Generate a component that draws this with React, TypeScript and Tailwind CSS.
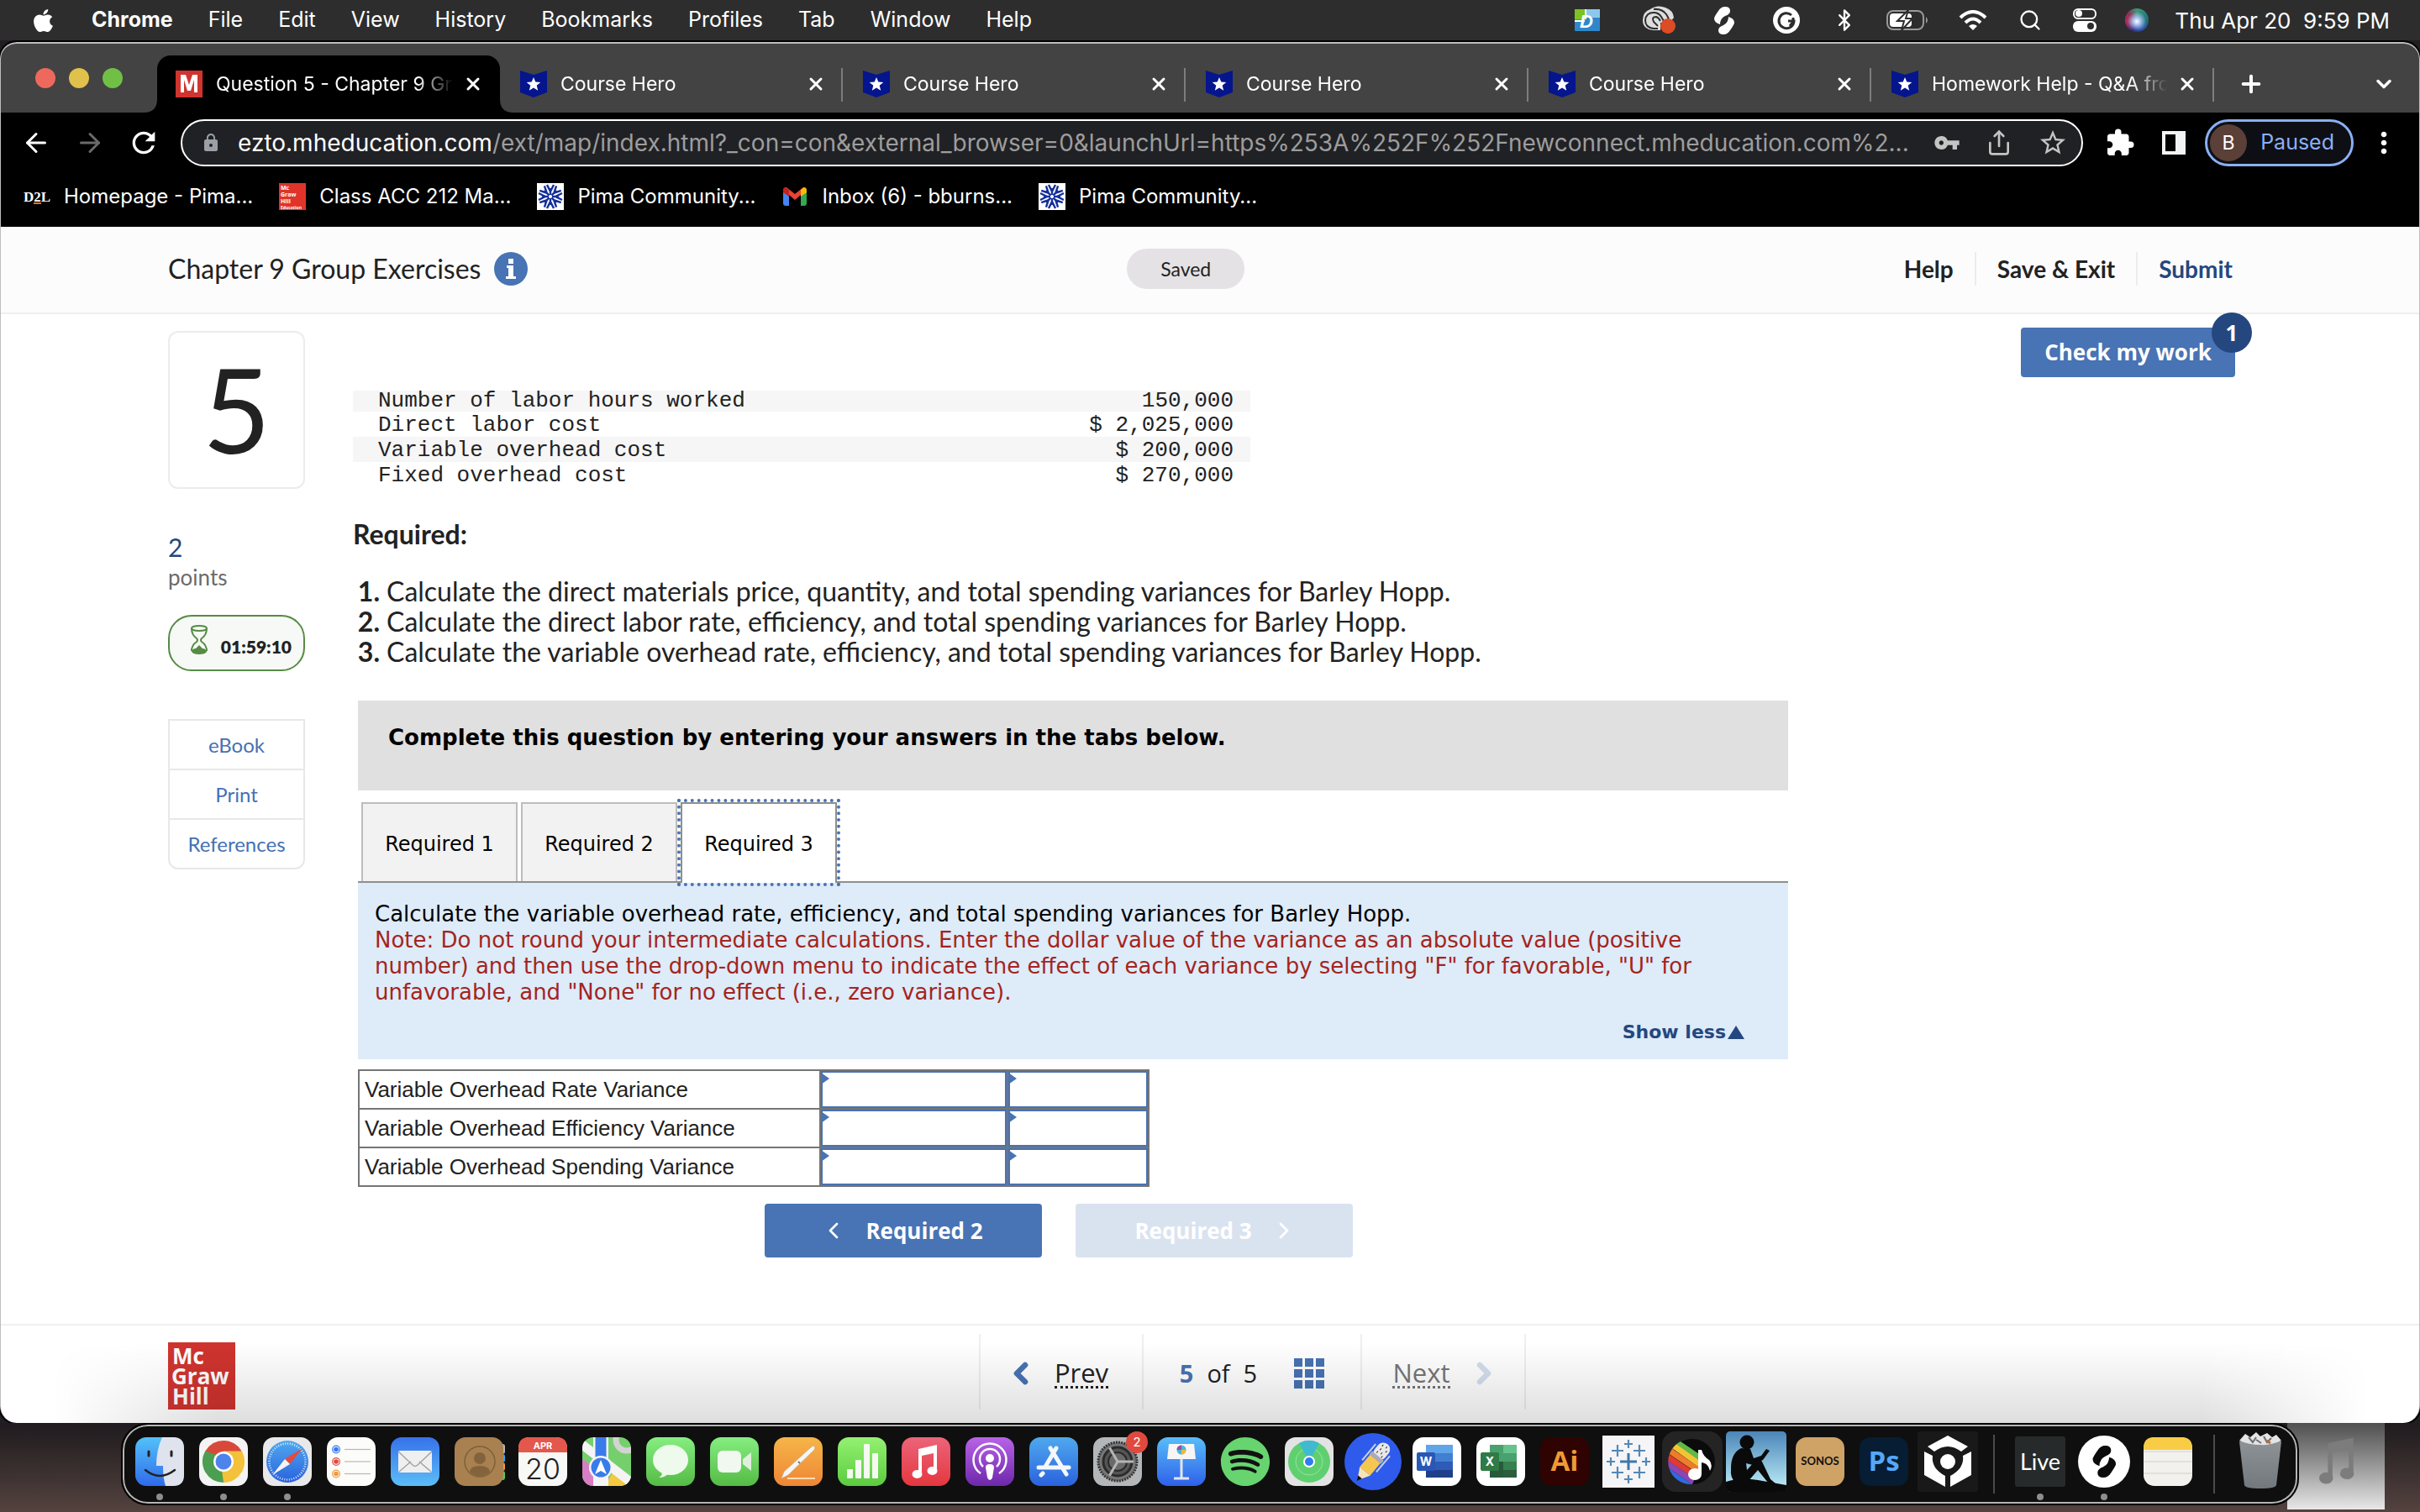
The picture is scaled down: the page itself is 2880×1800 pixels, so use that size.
import React from 'react';
import { ArrowLeft, ArrowRight, Bluetooth, ChevronDown, ChevronLeft, ChevronRight, Plus, Search, Share, X } from 'lucide-react';
import { MdExtension, MdLock, MdMoreVert, MdRefresh, MdStarBorder, MdVpnKey } from 'react-icons/md';
import { FaApple, FaSpotify } from 'react-icons/fa';

const menus = ['File', 'Edit', 'View', 'History', 'Bookmarks', 'Profiles', 'Tab', 'Window', 'Help'];

const heroTabs = ['Course Hero', 'Course Hero', 'Course Hero', 'Course Hero', 'Homework Help - Q&A from'];

const laborRows = [
  ['Number of labor hours worked', '150,000'],
  ['Direct labor cost', '$ 2,025,000'],
  ['Variable overhead cost', '$ 200,000'],
  ['Fixed overhead cost', '$ 270,000'],
];

const requirements = [
  'Calculate the direct materials price, quantity, and total spending variances for Barley Hopp.',
  'Calculate the direct labor rate, efficiency, and total spending variances for Barley Hopp.',
  'Calculate the variable overhead rate, efficiency, and total spending variances for Barley Hopp.',
];

const variances = ['Variable Overhead Rate Variance', 'Variable Overhead Efficiency Variance', 'Variable Overhead Spending Variance'];

const linkHalf = 'M13 0Q19 0 19 5Q19 9 13 11Q7 14 7 21Q0 19 0 14Q0 12 5 5Q8 0 13 0Z';

const MenuBar: React.FC = () => (
  <div className="h-12 shrink-0 bg-[#2d2d2d] text-white flex items-center justify-between pl-9 pr-9 text-[25px]">
    <div className="flex items-center gap-[42px]">
      <FaApple className="size-[31px]" />
      <span className="font-bold">Chrome</span>
      {menus.map((m) => (
        <button key={m}>{m}</button>
      ))}
    </div>
    <div className="flex items-center">
      <svg viewBox="0 0 30 26" className="w-[30px] h-[26px] mr-[50px]">
        <rect width="30" height="26" rx="1" fill="#2f87c9" />
        <rect width="12" height="12" fill="#7ac321" />
        <rect x="14" width="16" height="10" fill="#8cc8ee" />
        <path d="M0 14h12M13 0v12" stroke="#fff" strokeWidth="2" />
        <text x="6" y="22" fontSize="22" fontWeight="700" fontStyle="italic" fontFamily="Liberation Sans, sans-serif" fill="#fff">D</text>
      </svg>
      <svg viewBox="0 0 40 34" className="w-[40px] h-[34px] mr-[46px]">
        <path d="M10 4Q18 -2 28 2Q37 5 38 14L33 20H22V29H14Q1 28 1 17Q1 7 10 4Z" fill="#ddd" />
        <path d="M19 27H14Q4 26 4 17Q5 8 14 8Q20 8 23 13L26 18" fill="none" stroke="#2d2d2d" strokeWidth="2" />
        <path d="M19 24L14 19Q11 13 17 13Q20 14 22 18M14 4Q24 3 29 10Q31 13 32 16" fill="none" stroke="#2d2d2d" strokeWidth="2" />
        <circle cx="31" cy="24" r="9" fill="#de4c26" />
      </svg>
      <svg viewBox="0 0 24 33" className="w-6 h-[33px] mr-[46px]" fill="#fff">
        <path d={linkHalf} />
        <path d={linkHalf} transform="rotate(180 12 16.500)" />
      </svg>
      <svg viewBox="0 0 32 32" className="size-8 mr-[39px]">
        <circle cx="16" cy="16" r="16" fill="#fff" />
        <path d="M22 10A9 9 0 1 0 25 17H18M24 13V18L20 23" fill="none" stroke="#2d2d2d" strokeWidth="3" />
      </svg>
      <Bluetooth className="size-7 mr-[36px]" strokeWidth={2} />
      <svg viewBox="0 0 50 26" className="w-[50px] h-[26px] mr-[36px]">
        <rect x="1" y="2" width="43" height="22" rx="7" fill="none" stroke="#999" strokeWidth="2" />
        <path d="M47 9q4 4 0 8z" fill="#999" />
        <rect x="4" y="5" width="26" height="16" rx="4" fill="#fff" />
        <path d="M26 1L13 14h8l-3 11L31 11h-8z" fill="#fff" stroke="#2d2d2d" strokeWidth="2" />
      </svg>
      <svg viewBox="0 0 34 24" className="w-[34px] h-6 mr-[37px]" fill="none" stroke="#fff" strokeWidth="4">
        <path d="M2 9Q17 -5 32 9M8 15Q17 6 26 15" />
        <path d="M17 24L12 19Q17 15 22 19Z" fill="#fff" stroke="none" />
      </svg>
      <Search className="size-7 mr-[37px]" strokeWidth={2} />
      <svg viewBox="0 0 28 28" className="size-7 mr-[34px]">
        <rect x="1" y="1" width="26" height="11" rx="5" fill="none" stroke="#fff" strokeWidth="2" />
        <circle cx="7" cy="6" r="4" fill="#fff" />
        <rect y="15" width="28" height="13" rx="6" fill="#fff" />
        <circle cx="21" cy="21" r="4" fill="#2d2d2d" />
      </svg>
      <span className="size-7 rounded-full mr-[31px] bg-[radial-gradient(circle_at_50%_55%,#fff_0%,#a9c4f0_20%,transparent_55%),conic-gradient(#3c9a7d,#1f6f78_90deg,#2b52b0_150deg,#2c2f80_200deg,#b02d5c_260deg,#8a3355_310deg,#3c9a7d)]" />
      <span className="whitespace-pre text-[26px]">Thu Apr 20  9:59 PM</span>
    </div>
  </div>
);

const HeroIcon = () => (
  <svg viewBox="0 0 32 32" className="size-8 shrink-0">
    <path d="M0 0L16 5L32 0V26L16 32L0 26Z" fill="#04158e" />
    <path d="M16 8l2.300 5.500 6 .4-4.600 3.900 1.500 5.900L16 20.400l-5.200 3.300 1.500-5.900-4.600-3.900 6-.4z" fill="#fff" />
  </svg>
);

const TabStrip: React.FC = () => (
  <div className="h-[82px] bg-[#434343] flex text-white text-[23px]">
    <div className="w-[186px] shrink-0 flex items-center gap-4 pl-[41px]">
      <span className="size-6 rounded-full bg-[#ee695d]" />
      <span className="size-6 rounded-full bg-[#e0c14c]" />
      <span className="size-6 rounded-full bg-[#71c046]" />
    </div>
    <div className="relative w-[408px] min-w-0 mt-[14px] bg-black rounded-t-[16px] flex items-center pl-[22px] pr-5">
      <svg viewBox="0 0 16 16" className="absolute bottom-0 -left-4 size-4"><path d="M16 0V16H0Q16 16 16 0" fill="#000" /></svg>
      <svg viewBox="0 0 16 16" className="absolute bottom-0 -right-4 size-4"><path d="M0 0V16H16Q0 16 0 0" fill="#000" /></svg>
      <svg viewBox="0 0 32 32" className="size-8 shrink-0">
        <rect width="32" height="32" fill="#d0342f" />
        <path d="M6 26V5h6l4 12 4-12h6v21h-4V11l-4 13h-4L10 11v15z" fill="#fff" />
      </svg>
      <span className="ml-4 flex-1 whitespace-nowrap overflow-hidden mask-[linear-gradient(to_right,black_85%,transparent)]">Question 5 - Chapter 9 Group</span>
      <button aria-label="Close tab" className="ml-3"><X className="size-6" strokeWidth={3} /></button>
    </div>
    {heroTabs.map((t, i) => (
      <div key={i} className="w-[408px] min-w-0 mt-[14px] flex items-center pl-6 pr-5 relative">
        <HeroIcon />
        <span className="ml-4 flex-1 whitespace-nowrap overflow-hidden mask-[linear-gradient(to_right,black_85%,transparent)]">{t}</span>
        <button aria-label="Close tab" className="ml-3"><X className="size-6" strokeWidth={3} /></button>
        <span className="absolute right-0 top-[15px] h-10 w-[2px] bg-[#7d7d7d]" />
      </div>
    ))}
    <div className="grow mt-[14px] flex items-center justify-between pl-[28px] pr-[28px]">
      <button aria-label="New tab"><Plus className="size-8" strokeWidth={3} /></button>
      <button aria-label="Search tabs"><ChevronDown className="size-7" strokeWidth={3} /></button>
    </div>
  </div>
);

const SnowIcon = () => (
  <svg viewBox="0 0 32 32" className="size-8">
    <rect width="32" height="32" fill="#fff" />
    <g stroke="#15309b" strokeWidth="2.400" fill="none">
      {[0, 45, 90, 135, 180, 225, 270, 315].map((r) => (
        <path key={r} transform={`rotate(${r} 16 16)`} d="M16 14V6M12 2L16 10L20 2" />
      ))}
    </g>
  </svg>
);

const bookmarks = [
  {
    label: 'Homepage - Pima...',
    icon: (
      <svg viewBox="0 0 32 32" className="size-8">
        <text x="0" y="22" fontSize="17" fontFamily="Liberation Serif, serif" fontWeight="700" fill="#fff">D2L</text>
        <path d="M12 24h9" stroke="#e57424" strokeWidth="2" />
      </svg>
    ),
  },
  {
    label: 'Class ACC 212 Ma...',
    icon: (
      <svg viewBox="0 0 32 32" className="size-8" fontFamily="Open Sans, sans-serif" fontWeight="700" fill="#fff">
        <rect width="32" height="32" fill="#e0332a" />
        <text x="2" y="8" fontSize="7">Mc</text>
        <text x="2" y="16" fontSize="7">Graw</text>
        <text x="2" y="24" fontSize="7">Hill</text>
        <text x="2" y="31" fontSize="5">Education</text>
      </svg>
    ),
  },
  { label: 'Pima Community...', icon: <SnowIcon /> },
  {
    label: 'Inbox (6) - bburns...',
    icon: (
      <svg viewBox="0 0 32 32" className="size-8">
        <path d="M2 9V24Q2 27 5 27H9V13Z" fill="#4285f4" />
        <path d="M23 13V27H27Q30 27 30 24V9Z" fill="#34a853" />
        <path d="M2 9Q2 5 6 5L16 13L26 5Q28 5 28 5L23 14L16 20L9 14L2 11Z" fill="#ea4335" />
        <path d="M23 8L26 5.500Q30 4 30 9V11L23 16Z" fill="#fbbc04" />
        <path d="M2 9Q2 4 6 5.500L9 8V16L2 11Z" fill="#c5221f" />
      </svg>
    ),
  },
  { label: 'Pima Community...', icon: <SnowIcon /> },
];

const Toolbar: React.FC = () => (
  <div className="bg-black text-white h-[136px] pt-2">
    <div className="h-14 flex items-center pl-6 pr-[22px]">
      <button aria-label="Back"><ArrowLeft className="size-9" strokeWidth={2} /></button>
      <button aria-label="Forward" className="ml-7 text-[#6b6b6b]"><ArrowRight className="size-9" strokeWidth={2} /></button>
      <button aria-label="Reload" className="ml-[26px]"><MdRefresh className="size-10" /></button>
      <div className="ml-6 flex-1 min-w-0 h-14 rounded-full border-2 border-white bg-[#202124] flex items-center pl-[22px] pr-4">
        <MdLock className="size-6 text-[#9aa0a6] shrink-0" />
        <div role="textbox" aria-label="Address" tabIndex={0} className="ml-5 flex-1 min-w-0 truncate text-[28px] text-[#9d9d9d]">
          <span className="text-white">ezto.mheducation.com</span>/ext/map/index.html?_con=con&amp;external_browser=0&amp;launchUrl=https%253A%252F%252Fnewconnect.mheducation.com%2...
        </div>
        <div className="flex items-center gap-[30px] ml-4 text-[#c4c4c4]">
          <MdVpnKey className="size-8" />
          <Share className="size-8" strokeWidth={2} />
          <MdStarBorder className="size-9" />
        </div>
      </div>
      <MdExtension className="size-9 ml-[26px]" />
      <svg viewBox="0 0 28 28" className="size-7 ml-[32px]"><path d="M0 0H28V28H0ZM4 4V24H16V4Z" fillRule="evenodd" fill="#f1f3f4" /></svg>
      <button className="ml-[23px] h-14 rounded-full border-3 border-[#8ab0f3] bg-[#0e0f14] pl-[3px] pr-5 flex items-center gap-4 text-[#8ab0f3] text-[25px]">
        <span className="size-11 rounded-full bg-[#5b4038] text-white text-[23px] flex items-center justify-center">B</span>
        Paused
      </button>
      <button aria-label="Menu" className="ml-4"><MdMoreVert className="size-10" /></button>
    </div>
    <div className="h-[72px] flex items-center gap-[31px] pl-[27px] text-[24px]">
      {bookmarks.map((b, i) => (
        <a key={i} href="#" className="flex items-center gap-4">
          {b.icon}
          {b.label}
        </a>
      ))}
    </div>
  </div>
);

const PageHeader: React.FC = () => (
  <header className="h-[104px] bg-[#fcfcfc] border-b-2 border-[#efefef] pl-[199px] pr-[222px] pb-0.5 grid grid-cols-[33fr_140px_34fr] items-center">
    <div className="flex items-center gap-4 text-[32px]">
      <h1>Chapter 9 Group Exercises</h1>
      <svg viewBox="0 0 40 40" className="size-10">
        <circle cx="20" cy="20" r="20" fill="#4873b4" />
        <rect x="17" y="8" width="6" height="6" fill="#fff" />
        <path d="M15 16h8v13h3v3H14v-3h3V19h-2z" fill="#fff" />
      </svg>
    </div>
    <span className="h-12 rounded-full bg-[#e4e2e5] text-[23px] flex items-center justify-center">Saved</span>
    <nav className="flex items-center justify-end text-[28px] leading-10 font-bold">
      <a href="#" className="pr-[25px]">Help</a>
      <a href="#" className="px-[25px] border-x-2 border-[#ececec]">Save &amp; Exit</a>
      <a href="#" className="pl-[25px] text-[#24477f]">Submit</a>
    </nav>
  </header>
);

const SideColumn: React.FC = () => (
  <aside className="w-[163px] shrink-0 mt-1">
    <div className="h-[188px] border-2 border-[#ececec] rounded-xl flex items-center justify-center text-[140px] leading-none pb-1">5</div>
    <div className="mt-[50px] text-[30px] leading-[38px] text-[#24477f]">2</div>
    <div className="text-[26px] leading-[34px] text-[#6b6b6b]">points</div>
    <div className="mt-7 h-[67px] rounded-[28px] border-2 border-[#568b45] bg-[#f6f9f5] flex items-center justify-between pl-6 pr-3.5 pt-1">
      <svg viewBox="0 0 22 36" className="w-[22px] h-[36px] mb-3">
        <g fill="none" stroke="#568b45" strokeWidth="2">
          <ellipse cx="11" cy="4" rx="9" ry="3" />
          <path d="M2 4Q2 12 8 16Q10 18 8 20Q2 24 2 31M20 4Q20 12 14 16Q12 18 14 20Q20 24 20 31" />
        </g>
        <path d="M2 32Q3 28 7 28L11 24L15 28Q19 28 20 32Q18 35 11 35Q4 35 2 32" fill="#568b45" />
      </svg>
      <span className="text-[21px] font-extrabold pt-1">01:59:10</span>
    </div>
    <nav className="mt-[57px] border-2 border-[#e8e8e8] rounded-b-xl divide-y-2 divide-[#e8e8e8] text-[24px] leading-[57px] text-center text-[#4471b4] flex flex-col">
      <a href="#">eBook</a>
      <a href="#">Print</a>
      <a href="#">References</a>
    </nav>
  </aside>
);

const Marker = () => (
  <svg viewBox="0 0 10 14" className="absolute left-0 top-0.5 w-[10px] h-[14px] pointer-events-none"><path d="M0 0L10 7L0 14Z" fill="#4873b4" /></svg>
);

const Question: React.FC = () => (
  <section className="flex-1 max-w-[1708px] pt-[75px]">
    <table className="w-[1068px] font-['Liberation_Mono',monospace] text-[26px]">
      <tbody>
        {laborRows.map(([label, value], i) => (
          <tr key={label} className={i === 0 ? 'bg-[#f6f6f6] leading-[25px]' : 'odd:bg-[#f6f6f6] leading-7'}>
            <td className={i === 0 ? 'pl-[30px]' : 'pl-[30px] pt-0.5'}>{label}</td>
            <td className={i === 0 ? 'pr-5 text-right' : 'pr-5 pt-0.5 text-right'}>{value}</td>
          </tr>
        ))}
      </tbody>
    </table>
    <h2 className="mt-[38px] text-[32px] leading-9 font-bold">Required:</h2>
    <ol className="mt-8 text-[32px] leading-9">
      {requirements.map((r, i) => (
        <li key={r} className="flex">
          <b className="w-8 text-right mr-2">{i + 1}.</b>
          {r}
        </li>
      ))}
    </ol>

    <div className="ml-1.5 mt-10 font-['DejaVu_Sans',sans-serif] text-black">
      <div className="h-[107px] bg-[#e0e0e0] pt-7 pl-9 text-[26px] leading-8 font-bold">
        Complete this question by entering your answers in the tabs below.
      </div>
      <div role="tablist" className="mt-[14px] pl-1 flex gap-1 border-b-2 border-[#8f8f8f] text-[24px]">
        <button role="tab" className="w-[186px] h-[94px] pt-1 bg-[#f2f2f2] border-2 border-b-0 border-[#bdbdbd]">Required 1</button>
        <button role="tab" className="w-[186px] h-[94px] pt-1 bg-[#f2f2f2] border-2 border-b-0 border-[#bdbdbd]">Required 2</button>
        <button role="tab" aria-selected="true" className="w-[186px] h-[96px] -mb-0.5 pt-0.5 bg-white border-2 border-b-0 border-[#8f8f8f] outline-4 outline-dotted outline-[#4873b4] relative">
          Required 3
        </button>
      </div>
      <div className="bg-[#deebf8] pt-[22px] pl-5 pr-[52px] pb-4 text-[26px] leading-[31px]">
        <p>Calculate the variable overhead rate, efficiency, and total spending variances for Barley Hopp.</p>
        <p className="text-[#a32420]">
          Note: Do not round your intermediate calculations. Enter the dollar value of the variance as an absolute value (positive number) and then use the drop-down menu to indicate the effect of each variance by selecting "F" for favorable, "U" for unfavorable, and "None" for no effect (i.e., zero variance).
        </p>
        <div className="mt-4 flex justify-end">
          <button className="flex items-center gap-0.5 text-[22px] leading-8 font-bold text-[#24477f]">
            Show less
            <svg viewBox="0 0 20 16" className="w-5 h-4"><path d="M10 0L20 16H0Z" fill="#24477f" /></svg>
          </button>
        </div>
      </div>

      <table className="mt-3 border-collapse font-['Liberation_Sans',sans-serif] text-[26px] text-[#222]">
        <tbody>
          {variances.map((v) => (
            <tr key={v} className="h-[46px]">
              <th scope="row" className="w-[549px] border-2 border-[#757575] pl-1.5 text-left font-normal leading-[30px]">{v}</th>
              <td className="w-[223px] border-2 border-[#757575] p-0">
                <div className="relative">
                  <Marker />
                  <input aria-label={v} className="block w-full h-11 border-2 border-[#4873b4] bg-white outline-none px-4" />
                </div>
              </td>
              <td className="w-[168px] border-2 border-[#757575] p-0">
                <div className="relative">
                  <Marker />
                  <select aria-label={`${v} effect`} defaultValue="" className="block w-full h-11 border-2 border-[#4873b4] bg-white appearance-none px-4">
                    <option value=""></option>
                  </select>
                </div>
              </td>
            </tr>
          ))}
        </tbody>
      </table>

      <div className="mt-5 pr-[34px] flex justify-center gap-10 font-['Open_Sans',sans-serif] font-bold text-[26px] text-white">
        <button className="w-[330px] h-16 rounded-sm bg-[#4873b4] flex items-center justify-center gap-[22px] pr-1">
          <ChevronLeft className="size-8" strokeWidth={2} />
          Required 2
        </button>
        <button disabled className="w-[330px] h-16 rounded-sm bg-[#d9e3f0] flex items-center justify-center gap-[22px] pl-1">
          Required 3
          <ChevronRight className="size-8" strokeWidth={2} />
        </button>
      </div>
    </div>
  </section>
);

const PageFooter: React.FC = () => (
  <footer className="relative h-[118px] border-t-2 border-[#f0f0f0] pl-[199px] flex items-start">
    <svg viewBox="0 0 80 80" className="size-20 mt-5" fontFamily="Open Sans, sans-serif" fontWeight="700" fontSize="26" fill="#fff">
      <rect width="80" height="80" fill="#d0342f" />
      <text x="5" y="26">Mc</text>
      <text x="4" y="50">Graw</text>
      <text x="5" y="74">Hill</text>
    </svg>
    <div className="mt-2.5 ml-[885px] h-[90px] flex items-center text-[31px] border-x-2 border-[#efefef] divide-x-2 divide-[#efefef] font-['Open_Sans',sans-serif]">
      <a href="#" className="w-[194px] h-full flex items-center justify-center gap-5 pt-1 pr-3">
        <ChevronLeft className="size-10" strokeWidth={4} color="#4873b4" />
        <span className="border-b-3 border-dotted border-[#222] leading-8">Prev</span>
      </a>
      <div className="w-[260px] h-full flex items-center justify-center gap-11 pt-1">
        <span className="text-[29px] flex gap-4"><b className="text-[#4873b4]">5</b> <span>of</span> <span>5</span></span>
        <svg viewBox="0 0 36 36" className="size-9" fill="#4873b4">
          {[0, 13, 26].map((y) => [0, 13, 26].map((x) => <rect key={`${x}-${y}`} x={x} y={y} width="10" height="10" />))}
        </svg>
      </div>
      <a href="#" className="w-[193px] h-full flex items-center justify-center gap-5 pt-1 pl-2 text-[#767676]">
        <span className="border-b-3 border-dotted border-[#767676] leading-8">Next</span>
        <ChevronRight className="size-10" strokeWidth={4} color="#d4dfee" />
      </a>
    </div>
    <div className="absolute inset-x-0 bottom-0 h-24 pointer-events-none bg-linear-to-b from-transparent to-black/13 mask-[linear-gradient(to_right,transparent_60px,black_260px,black_calc(100%-260px),transparent_calc(100%-60px))]" />
  </footer>
);

const Tile = ({ fill }: { fill: string }) => <rect x="9" y="9" width="58" height="58" rx="13" fill={fill} />;

const NotePath = ({ fill }: { fill: string }) => (
  <g fill={fill}>
    <path d="M29 23L51 18V50H47V28L33 31V54H29Z" />
    <ellipse cx="27.500" cy="53" rx="6" ry="5" />
    <ellipse cx="45.500" cy="49" rx="6" ry="5" />
  </g>
);

const dockApps: { name: string; running?: boolean; art: React.ReactNode }[] = [
  {
    name: 'Finder',
    running: true,
    art: (
      <>
        <Tile fill="url(#finder)" />
        <path d="M41 9H54Q67 9 67 22V54Q67 67 54 67H45Q42 58 42 43H34Q34 24 41 9Z" fill="#dfe3ee" />
        <path d="M25 26v5M52 26v5" stroke="#222" strokeWidth="3" strokeLinecap="round" />
        <path d="M21 48Q38 62 56 48" fill="none" stroke="#222" strokeWidth="2.500" strokeLinecap="round" />
      </>
    ),
  },
  {
    name: 'Chrome',
    running: true,
    art: (
      <>
        <Tile fill="#f4f4f4" />
        <path d="M38 38L16.300 25.500A25 25 0 0 1 59.700 25.500Z" fill="#d9493a" />
        <path d="M38 38L59.700 25.500A25 25 0 0 1 38 63Z" fill="#f3c13a" />
        <path d="M38 38L38 63A25 25 0 0 1 16.300 25.500Z" fill="#4c9e50" />
        <path d="M38 25.500H59.700L48 44Z" fill="#f3c13a" />
        <path d="M27 44L16.300 25.500L30 30Z" fill="#4c9e50" />
        <path d="M49 44L38 63L36 48Z" fill="#f3c13a" />
        <circle cx="38" cy="38" r="12" fill="#fff" />
        <circle cx="38" cy="38" r="9.500" fill="#4f83ec" />
      </>
    ),
  },
  {
    name: 'Safari',
    running: true,
    art: (
      <>
        <Tile fill="#e9e9eb" />
        <circle cx="38" cy="38" r="25" fill="url(#blue)" />
        <circle cx="38" cy="38" r="21.500" fill="none" stroke="#fff" strokeWidth="2.500" strokeDasharray="0.800 2" />
        <path d="M56 22L41 41L35 35Z" fill="#e8483f" />
        <path d="M20 54L41 41L35 35Z" fill="#f4f4f4" />
      </>
    ),
  },
  {
    name: 'Reminders',
    art: (
      <>
        <Tile fill="#fcfcfa" />
        {['#3679f0', '#e04a40', '#ef9a38'].map((c, i) => (
          <g key={c}>
            <circle cx="20" cy={23.5 + i * 14.5} r="4.300" fill="none" stroke={c} strokeWidth="1.200" />
            <circle cx="20" cy={23.5 + i * 14.5} r="2.800" fill={c} />
            <path d={`M30 ${23.5 + i * 14.5}H61`} stroke="#b8b8b8" strokeWidth="1.200" />
          </g>
        ))}
      </>
    ),
  },
  {
    name: 'Mail',
    art: (
      <>
        <Tile fill="url(#mail)" />
        <rect x="18" y="25" width="40" height="26" rx="2" fill="#efefef" />
        <path d="M19 50L33 38M57 50L43 38M18 26L35 42Q38 45 41 42L58 26" fill="none" stroke="#a5a5a5" strokeWidth="1.500" />
      </>
    ),
  },
  {
    name: 'Contacts',
    art: (
      <>
        <rect x="50" y="17" width="19" height="12" rx="3" fill="#b5b5b5" />
        <rect x="50" y="29" width="19" height="10" rx="3" fill="#3fa9e8" />
        <rect x="50" y="39" width="19" height="10" rx="3" fill="#f1963b" />
        <rect x="50" y="49" width="19" height="11" rx="3" fill="#5ac85a" />
        <Tile fill="#a98150" />
        <circle cx="39" cy="38" r="18" fill="none" stroke="#7f6038" strokeWidth="1.500" />
        <circle cx="39" cy="34" r="7" fill="#83633c" />
        <path d="M27 50Q28 43 39 43Q50 43 51 50Q46 55 39 55Q32 55 27 50" fill="#83633c" />
      </>
    ),
  },
  {
    name: 'Calendar',
    art: (
      <>
        <Tile fill="#f8f8f6" />
        <path d="M9 27V22Q9 9 22 9H54Q67 9 67 22V27Z" fill="#e4574c" />
        <text x="38" y="23" fontSize="11" fontWeight="700" textAnchor="middle" fill="#fff">APR</text>
        <text x="38" y="59" fontSize="34" fontWeight="300" textAnchor="middle" fill="#222">20</text>
      </>
    ),
  },
  {
    name: 'Maps',
    art: (
      <g clipPath="url(#tile)">
        <rect width="76" height="76" fill="#76cf6d" />
        <path d="M0 28L76 84V76H0Z" fill="#d77fc4" />
        <path d="M30 76L46 50L76 76Z" fill="#f3c942" />
        <path d="M4 14L74 68" stroke="#f4f4f4" strokeWidth="11" />
        <path d="M31 0V76" stroke="#f4f4f4" strokeWidth="18" />
        <path d="M31 0V36" stroke="#3a7bea" strokeWidth="13" />
        <circle cx="62" cy="12" r="13" fill="none" stroke="#d3d3d3" strokeWidth="7" />
        <circle cx="31" cy="45" r="14" fill="#f4f4f4" />
        <circle cx="31" cy="45" r="11.500" fill="#3a7bea" />
        <path d="M31 36L38 53L31 49L24 53Z" fill="#fff" />
      </g>
    ),
  },
  {
    name: 'Messages',
    art: (
      <>
        <Tile fill="url(#green)" />
        <ellipse cx="38" cy="36" rx="21" ry="18" fill="#eefbec" />
        <path d="M28 49Q29 54 24 57Q32 57 35 52Z" fill="#eefbec" />
      </>
    ),
  },
  {
    name: 'FaceTime',
    art: (
      <>
        <Tile fill="url(#green)" />
        <rect x="18" y="25" width="28" height="26" rx="6" fill="#f0f8ef" />
        <path d="M48 35L58 27V49L48 41Z" fill="#e0eedd" />
      </>
    ),
  },
  {
    name: 'Pages',
    art: (
      <>
        <Tile fill="url(#orange)" />
        <path d="M25 58H58" stroke="#fbdcae" strokeWidth="2" />
        <path d="M56 19Q59 20 57 24L26 54L18 58L21 50L53 21Z" fill="#f5f5f5" stroke="#d6b38a" />
        <path d="M38 38l2 2" stroke="#777" strokeWidth="2" />
      </>
    ),
  },
  {
    name: 'Numbers',
    art: (
      <>
        <Tile fill="url(#lime)" />
        <g fill="#f4f9f2">
          <rect x="20" y="47" width="7" height="11" rx="1" />
          <rect x="30" y="36" width="7" height="22" rx="1" />
          <rect x="40" y="17" width="7" height="41" rx="1" />
          <rect x="50" y="28" width="7" height="30" rx="1" />
        </g>
      </>
    ),
  },
  { name: 'Music', art: (<><Tile fill="url(#red)" /><NotePath fill="#fff" /></>) },
  {
    name: 'Podcasts',
    art: (
      <>
        <Tile fill="url(#purple)" />
        <g fill="none" stroke="#fff" strokeWidth="2.500">
          <path d="M27 52A19.500 19.500 0 1 1 49 52" />
          <path d="M30 44A12 12 0 1 1 46 44" />
        </g>
        <circle cx="38" cy="34" r="5" fill="#fff" />
        <path d="M33 45Q33 41 38 41Q43 41 43 45L41 57Q40 60 38 60Q36 60 35 57Z" fill="#fff" />
      </>
    ),
  },
  {
    name: 'App Store',
    art: (
      <>
        <Tile fill="url(#blue)" />
        <g stroke="#f4f7fd" strokeWidth="5" strokeLinecap="round">
          <path d="M41 22L28 44M34 22L53 53M20 45H56M25 52L23 54" />
        </g>
      </>
    ),
  },
  {
    name: 'Settings',
    art: (
      <>
        <Tile fill="#b4b7ba" />
        <circle cx="38" cy="38" r="23" fill="#777" stroke="#333" strokeWidth="3" strokeDasharray="2 1.200" />
        <circle cx="38" cy="38" r="17" fill="#555" stroke="#2b2b2b" strokeWidth="3" />
        <circle cx="38" cy="38" r="11" fill="#6a6a6a" stroke="#2b2b2b" strokeWidth="2" />
        {[0, 120, 240].map((d) => (
          <path key={d} d="M38 38H57" transform={`rotate(${d} 38 38)`} stroke="#b5b5b5" strokeWidth="3" />
        ))}
        <circle cx="61" cy="15" r="13" fill="#e0493d" />
        <text x="61" y="20" fontSize="15" textAnchor="middle" fill="#fff">2</text>
      </>
    ),
  },
  {
    name: 'Keynote',
    art: (
      <>
        <Tile fill="url(#keynote)" />
        <path d="M23 17H53L55 35H21Z" fill="#f6f6f6" />
        <path d="M38 35V57M29 58H47" stroke="#e0e5ee" strokeWidth="3" />
        <circle cx="38" cy="24" r="5.500" fill="#4fb3d9" />
        <path d="M38 24V18.500A5.500 5.500 0 0 0 32.500 24Z" fill="#9b4c9b" />
        <path d="M38 24H43.500A5.500 5.500 0 0 1 38 29.500Z" fill="#f0b73c" />
      </>
    ),
  },
  { name: 'Spotify', art: (<><circle cx="38" cy="38" r="28" fill="#111" /><FaSpotify x="8" y="8" size={60} color="#67d46f" /></>) },
  {
    name: 'Find My',
    art: (
      <>
        <Tile fill="#e3e3e3" />
        <circle cx="38" cy="38" r="25" fill="#5fd070" />
        <circle cx="38" cy="38" r="16" fill="none" stroke="#96e59b" />
        <path d="M38 38L26 16A25 25 0 0 1 50 16Z" fill="#41b9d0" />
        <circle cx="38" cy="38" r="7" fill="#fff" />
        <circle cx="38" cy="38" r="5" fill="#2f7cf0" />
      </>
    ),
  },
  {
    name: 'Notability',
    art: (
      <>
        <circle cx="38" cy="38" r="34" fill="#2f5bec" />
        <g transform="rotate(40 38 38)">
          <path d="M27 20V45M49 20V45" stroke="#c8d0e8" strokeWidth="2" />
          <rect x="30" y="11" width="16" height="22" rx="8" fill="#e9e9e9" />
          <path d="M34 16h1M39 15h1M42 19h1M35 21h1M39 24h1M34 26h1M42 27h1" stroke="#222" strokeWidth="2.500" />
          <rect x="29" y="29" width="18" height="5" fill="#aab" />
          <path d="M30 34H46V53H30Z" fill="#f6c750" />
          <path d="M30 53H46L38 67Z" fill="#f9e3b9" />
          <path d="M35 62H41L38 68Z" fill="#111" />
        </g>
      </>
    ),
  },
  {
    name: 'Word',
    art: (
      <>
        <Tile fill="#fff" />
        <rect x="25" y="18" width="32" height="10" fill="#60a4ea" />
        <rect x="25" y="28" width="32" height="10" fill="#427fd3" />
        <rect x="25" y="38" width="32" height="10" fill="#2c5cb8" />
        <rect x="25" y="48" width="32" height="9" fill="#1f3f8a" />
        <rect x="14" y="27" width="22" height="22" rx="2" fill="#2a57b5" />
        <text x="25" y="43" fontSize="14" fontWeight="700" textAnchor="middle" fill="#fff">W</text>
      </>
    ),
  },
  {
    name: 'Excel',
    art: (
      <>
        <Tile fill="#fff" />
        <rect x="25" y="18" width="32" height="39" fill="#49a26e" />
        <rect x="41" y="18" width="16" height="10" fill="#66c38c" />
        <rect x="41" y="38" width="16" height="19" fill="#2d5d3d" />
        <rect x="25" y="38" width="16" height="19" fill="#285a3a" />
        <rect x="41" y="38" width="16" height="10" fill="#37804f" />
        <rect x="14" y="27" width="22" height="22" rx="2" fill="#2f7a46" />
        <text x="25" y="43" fontSize="14" fontWeight="700" textAnchor="middle" fill="#fff">X</text>
      </>
    ),
  },
  {
    name: 'Illustrator',
    art: (
      <>
        <Tile fill="#2e0301" />
        <text x="38" y="49" fontSize="33" fontWeight="700" textAnchor="middle" fill="#f19a35" fontFamily="Open Sans, sans-serif">Ai</text>
      </>
    ),
  },
  {
    name: 'Tableau',
    art: (
      <>
        <rect x="7" y="7" width="62" height="62" fill="#f5f5f7" />
        <path d="M38 28V48M28 38H48" stroke="#3f77ab" strokeWidth="3" />
        <g stroke="#5588b5" strokeWidth="2.200">
          {[[25, 25], [51, 25], [25, 51], [51, 51]].map(([x, y]) => <path key={`${x}${y}`} d={`M${x} ${y - 7}V${y + 7}M${x - 7} ${y}H${x + 7}`} />)}
          {[[38, 17], [17, 38], [59, 38], [38, 59]].map(([x, y]) => <path key={`${x}${y}`} d={`M${x} ${y - 5}V${y + 5}M${x - 5} ${y}H${x + 5}`} />)}
        </g>
      </>
    ),
  },
  {
    name: 'Player',
    art: (
      <>
        <rect x="2" y="2" width="72" height="72" rx="16" fill="#242424" />
        <circle cx="38" cy="38" r="27" fill="#0b0b0b" />
        <g clipPath="url(#disc)" strokeWidth="7">
          <path d="M18 14L56 40" stroke="#5fb947" />
          <path d="M14 18L52 45" stroke="#f2c434" />
          <path d="M11 25L49 51" stroke="#ee7c2d" />
          <path d="M8 32L46 58" stroke="#dd3b34" />
          <path d="M6 39L44 65" stroke="#8b45b4" />
          <path d="M4 46L42 72" stroke="#2f6be0" />
        </g>
        <ellipse cx="41" cy="53" rx="8" ry="7" fill="#fff" />
        <path d="M45 24H49Q51 32 58 36Q63 42 59 49Q57 40 49 39V53H45Z" fill="#fff" />
      </>
    ),
  },
  {
    name: 'Kindle',
    art: (
      <>
        <rect x="2" y="2" width="72" height="72" rx="5" fill="url(#kindle)" />
        <path d="M2 62Q20 56 40 60L74 66V70Q74 74 70 74H7Q2 74 2 70Z" fill="#0a0a0a" />
        <circle cx="27" cy="15" r="8.500" fill="#0a0a0a" />
        <path d="M20 22Q8 28 8 46Q7 58 13 62H28L40 48L52 63L60 66L61 64L55 59L45 38Q42 33 37 37L27 48L26 40L34 42L46 36L54 25L50 23L44 31L35 34L31 23Z" fill="#0a0a0a" />
      </>
    ),
  },
  {
    name: 'Sonos',
    art: (
      <>
        <Tile fill="#cfa266" />
        <text x="38" y="42" fontSize="13" fontWeight="700" textAnchor="middle" fill="#111" fontFamily="Lato, sans-serif">SONOS</text>
      </>
    ),
  },
  {
    name: 'Photoshop',
    art: (
      <>
        <Tile fill="#061d33" />
        <text x="38" y="49" fontSize="33" fontWeight="700" textAnchor="middle" fill="#55a7f8" fontFamily="Open Sans, sans-serif">Ps</text>
      </>
    ),
  },
  {
    name: 'Cube',
    art: (
      <>
        <rect x="2" y="2" width="72" height="72" rx="3" fill="#191919" />
        <path d="M38 7L62 20L54 26Q38 14 22 26L14 20Z" fill="#fff" />
        <path d="M10 26L20 31Q18 46 35 55V68L10 54ZM66 26L56 31Q58 46 41 55V68L66 54Z" fill="#fff" />
        <circle cx="38" cy="38" r="9" fill="#fff" />
      </>
    ),
  },
];

const recentApps: typeof dockApps = [
  {
    name: 'Live',
    running: true,
    art: (
      <>
        <rect x="8" y="8" width="60" height="60" rx="3" fill="#272a2a" />
        <text x="38" y="48" fontSize="27" textAnchor="middle" fill="#fff" fontFamily="Lato, sans-serif">Live</text>
      </>
    ),
  },
  {
    name: 'Link',
    running: true,
    art: (
      <>
        <circle cx="38" cy="38" r="31" fill="#fff" />
        <g transform="translate(24.500 19) scale(1.150)" fill="#0c0c0c">
          <path d={linkHalf} />
          <path d={linkHalf} transform="rotate(180 12 16.500)" />
        </g>
      </>
    ),
  },
  {
    name: 'Notes',
    art: (
      <>
        <Tile fill="#f2f1ed" />
        <path d="M9 24V22Q9 9 22 9H54Q67 9 67 22V24Z" fill="#f8cd45" />
        <path d="M9 26H67M9 38H67M9 52H67" stroke="#cfcfcb" />
      </>
    ),
  },
];

const trash: (typeof dockApps)[number] = {
  name: 'Trash',
  art: (
    <>
      <path d="M13 14L19 66Q20 70 38 70Q56 70 57 66L63 14Z" fill="url(#trash)" />
      <path d="M13 13L20 5L26 9L33 3L38 8L46 4L52 9L57 6L63 13Q50 19 38 18Q24 18 13 13Z" fill="#e4e4e4" />
      <path d="M24 9l5 6 4-6M42 8l4 7 5-5M33 12l6 4" stroke="#6a6f78" strokeWidth="2" fill="none" />
      <path d="M45 13l5 3" stroke="#b86c3a" strokeWidth="3" />
    </>
  ),
};

const Gradient = ({ id, from, to }: { id: string; from: string; to: string }) => (
  <linearGradient id={id} x1="0" y1="0" x2="0" y2="1">
    <stop offset="0" stopColor={from} />
    <stop offset="1" stopColor={to} />
  </linearGradient>
);

const DockItem = ({ app }: { app: (typeof dockApps)[number] }) => (
  <button aria-label={app.name} className="w-[76px] pt-1 flex flex-col items-center">
    <svg viewBox="0 0 76 76" className="size-[76px]">{app.art}</svg>
    {app.running && <span className="size-2 rounded-full bg-[#8e8e8e]" />}
  </button>
);

const Dock: React.FC = () => (
  <div className="relative h-[106px] shrink-0 pt-0.5 flex justify-center bg-linear-to-b from-[#1f1b1e] to-[#54433f]">
    <svg className="absolute size-0" aria-hidden="true">
      <defs>
        <Gradient id="finder" from="#53c1f8" to="#2f6bec" />
        <Gradient id="blue" from="#4fa9ee" to="#2a62dd" />
        <Gradient id="mail" from="#3672ea" to="#5cbdf8" />
        <Gradient id="green" from="#85ee80" to="#55bb46" />
        <Gradient id="orange" from="#f6b548" to="#ee8636" />
        <Gradient id="lime" from="#94f172" to="#5bcb3f" />
        <Gradient id="red" from="#ec6479" to="#e5373f" />
        <Gradient id="purple" from="#b863e8" to="#6d28ab" />
        <Gradient id="keynote" from="#58bdf8" to="#2f60ea" />
        <Gradient id="kindle" from="#4a86b8" to="#c3f2fb" />
        <Gradient id="trash" from="#8d9296" to="#73787c" />
        <clipPath id="tile"><rect x="9" y="9" width="58" height="58" rx="13" /></clipPath>
        <clipPath id="disc"><path d="M24 14L45 27V48L38 65A27 27 0 0 1 24 14Z" /></clipPath>
      </defs>
    </svg>
    <div className="absolute right-[42px] top-0 w-[116px] h-[103px] bg-linear-to-b from-[#505050] to-[#e8e8e8] flex justify-center pt-4">
      <svg viewBox="21 17 30 42" className="w-[46px] h-[58px]"><NotePath fill="#7c7c7c" /></svg>
    </div>
    <div className="relative mr-px h-[94px] rounded-[30px] border-2 border-[#b5b5b5] bg-[#0f0f0f] outline-2 outline-black px-1 flex font-['Inter',sans-serif]">
      {dockApps.map((a) => <DockItem key={a.name} app={a} />)}
      <span className="w-[2px] h-[70px] mx-4 mt-2.5 bg-[#4b4b4b]" />
      {recentApps.map((a) => <DockItem key={a.name} app={a} />)}
      <span className="w-[2px] h-[70px] mx-4 mt-2.5 bg-[#4b4b4b]" />
      <DockItem app={trash} />
    </div>
  </div>
);

const App: React.FC = () => {
  return (
    <div className="min-h-screen flex flex-col bg-[#1d1b22] font-['Inter',sans-serif]">
      <MenuBar />
      <div className="flex-1 flex flex-col bg-[#211d22] pt-0.5">
        <div className="flex-1 flex flex-col rounded-[20px] overflow-hidden border-t-2 border-x border-[#bdbdbd] bg-white outline-2 outline-black">
          <TabStrip />
          <Toolbar />
          <div className="flex-1 flex flex-col font-['Lato',sans-serif] text-[#222]">
            <PageHeader />
            <main className="flex-1 flex pl-[199px] pr-[219px] pt-4 gap-[57px]">
              <SideColumn />
              <Question />
              <div className="ml-auto">
                <button className="relative w-[255px] h-[59px] rounded-sm bg-[#4873b4] text-white text-[26px] font-bold font-['Open_Sans',sans-serif]">
                  Check my work
                  <span className="absolute -top-[18px] -right-5 size-12 rounded-full bg-[#24477f] flex items-center justify-center">1</span>
                </button>
              </div>
            </main>
            <PageFooter />
          </div>
        </div>
      </div>
      <Dock />
    </div>
  );
};

export default App;
